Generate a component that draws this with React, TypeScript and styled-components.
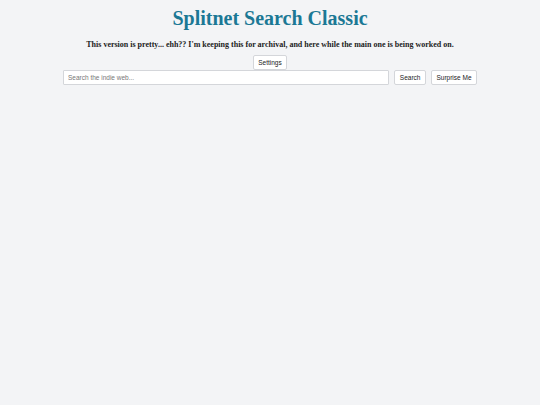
import React from 'react'
import styled, { createGlobalStyle } from 'styled-components'

const GlobalStyle = createGlobalStyle`
  html, body {
    margin: 0;
    padding: 0;
    background: #f3f4f6;
  }
  body {
    min-height: 405px;
    font-family: "Liberation Serif", Georgia, serif;
  }
`

const Page = styled.main`
  display: flex;
  flex-direction: column;
  align-items: center;
  padding-top: 7px;
`

const Title = styled.h1`
  margin: 0;
  font-family: "Liberation Serif", Georgia, serif;
  font-size: 20px;
  font-weight: 700;
  color: #1b7895;
  line-height: 22px;
`

const Note = styled.p`
  margin: 11px 0 0;
  font-family: "Liberation Serif", Georgia, serif;
  font-size: 8px;
  font-weight: 700;
  color: #222;
  line-height: 10px;
`

const Button = styled.button`
  height: 15px;
  padding: 0 4.5px;
  font-family: "Liberation Sans", Arial, sans-serif;
  font-size: 6.5px;
  color: #222;
  background: #fff;
  border: 1px solid #d4d6da;
  border-radius: 2px;
  cursor: pointer;
`

const SettingsRow = styled.div`
  margin-top: 1px;
`

const SearchRow = styled.form`
  display: flex;
  gap: 5px;
  width: 414px;
  margin-top: 0;
`

const SearchInput = styled.input`
  flex: 1;
  height: 15px;
  box-sizing: border-box;
  padding: 0 4px;
  font-family: "Liberation Sans", Arial, sans-serif;
  font-size: 6.5px;
  color: #222;
  background: #fff;
  border: 1px solid #d4d6da;
  border-radius: 1px;
  outline: none;

  &::placeholder {
    color: #777;
  }
`

export default function App() {
  return (
    <>
      <GlobalStyle />
      <Page>
        <Title>Splitnet Search Classic</Title>
        <Note>
          This version is pretty... ehh?? I'm keeping this for archival, and here while the main one is being worked on.
        </Note>
        <SettingsRow>
          <Button type="button">Settings</Button>
        </SettingsRow>
        <SearchRow onSubmit={(e) => e.preventDefault()}>
          <SearchInput placeholder="Search the indie web..." />
          <Button type="submit">Search</Button>
          <Button type="button">Surprise Me</Button>
        </SearchRow>
      </Page>
    </>
  )
}
